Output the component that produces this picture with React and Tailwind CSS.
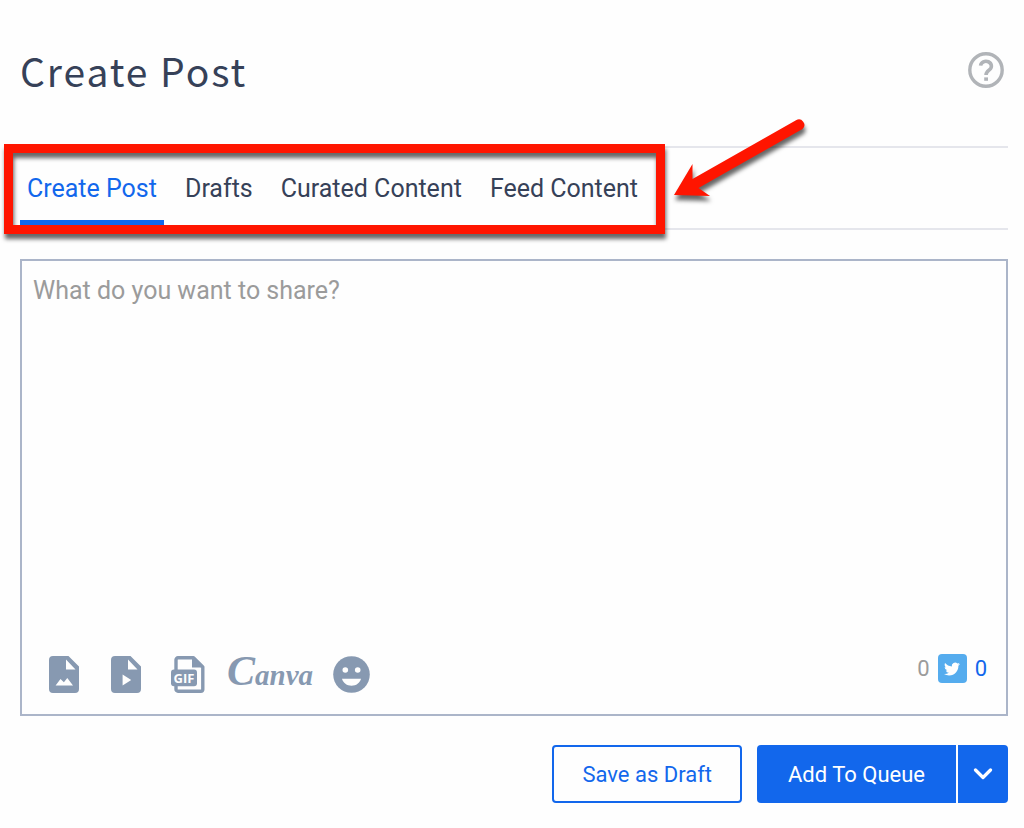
import React, { useState } from "react";

const tabs = ["Create Post", "Drafts", "Curated Content", "Feed Content"];

const HelpIcon = () => (
  <svg viewBox="0 0 36 36" className="size-9" fill="none" aria-hidden="true">
    <circle cx="18" cy="18" r="16.2" stroke="#b1b4b8" strokeWidth="3.4" />
    <path
      d="M12.6 13.6a5.4 4.8 0 1 1 9 4c-2.2 1.700-3.600 2.600-3.600 5.400"
      stroke="#b1b4b8"
      strokeWidth="3.6"
    />
    <rect x="16.2" y="25.4" width="3.8" height="3.4" fill="#b1b4b8" />
  </svg>
);

const ImageFileIcon = () => (
  <svg viewBox="0 0 30 37" className="h-[37px] w-[30px]" aria-hidden="true">
    <path
      fillRule="evenodd"
      fill="#8799b1"
      d="M4 0h15.5L30 10.5V33a4 4 0 0 1-4 4H4a4 4 0 0 1-4-4V4a4 4 0 0 1 4-4ZM17 3.600V13.400H26.500ZM6.600 29.400H24L18.300 22l-3.400 4.200-3.400-3.200Z"
    />
  </svg>
);

const VideoFileIcon = () => (
  <svg viewBox="0 0 30 37" className="h-[37px] w-[30px]" aria-hidden="true">
    <path
      fillRule="evenodd"
      fill="#8799b1"
      d="M4 0h15.5L30 10.5V33a4 4 0 0 1-4 4H4a4 4 0 0 1-4-4V4a4 4 0 0 1 4-4ZM17 3.600V13.400H26.500ZM11.600 18.600V29.400L20.200 24Z"
    />
  </svg>
);

const GifFileIcon = () => (
  <svg viewBox="0 0 34 37" className="h-[37px] w-[34px]" aria-hidden="true">
    <path
      fill="#fefefe"
      stroke="#8799b1"
      strokeWidth="3.4"
      strokeLinejoin="round"
      d="M7 1.800H22.500L31.800 11V33.200a2 2 0 0 1-2 2H7a2 2 0 0 1-2-2V3.800a2 2 0 0 1 2-2Z"
    />
    <path fill="#8799b1" d="M21 2v9.500H32L23 1.500Z" />
    <rect y="13.6" width="26" height="16.6" rx="3" fill="#8799b1" />
    <text
      x="13"
      y="26.6"
      textAnchor="middle"
      fill="#fefefe"
      className="font-['Open_Sans',sans-serif] text-[13px] font-bold"
    >
      GIF
    </text>
  </svg>
);

const SmileIcon = () => (
  <svg viewBox="0 0 37 37" className="size-[37px]" aria-hidden="true">
    <circle cx="18.5" cy="18.5" r="18.3" fill="#8799b1" />
    <circle cx="12.3" cy="14" r="2.8" fill="#fefefe" />
    <circle cx="24.7" cy="14" r="2.8" fill="#fefefe" />
    <path fill="#fefefe" d="M9 22.800H28C27 27 23 29.800 18.500 29.800S10 27 9 22.800Z" />
  </svg>
);

const TwitterIcon = () => (
  <svg viewBox="0 0 24 24" className="size-4" fill="#fefefe" aria-hidden="true">
    <path d="M23.950 4.570a10 10 0 0 1-2.820.770 4.960 4.960 0 0 0 2.160-2.720c-.950.550-2 .960-3.130 1.180a4.920 4.920 0 0 0-8.380 4.480C7.690 8.090 4.070 6.130 1.640 3.160a4.820 4.820 0 0 0-.670 2.480c0 1.710.870 3.210 2.190 4.100a4.900 4.900 0 0 1-2.230-.620v.060a4.920 4.920 0 0 0 3.950 4.830 5 5 0 0 1-2.210.080 4.940 4.940 0 0 0 4.600 3.420A9.870 9.870 0 0 1 0 19.540a14 14 0 0 0 7.550 2.210c9.050 0 14-7.500 14-13.980 0-.210 0-.420-.020-.630a9.940 9.940 0 0 0 2.420-2.570Z" />
  </svg>
);

const ChevronIcon = () => (
  <svg viewBox="0 0 20 12" className="h-3 w-5" fill="none" aria-hidden="true">
    <path
      d="M2.500 2 10 9.500 17.500 2"
      stroke="#fff"
      strokeWidth="3.2"
      strokeLinecap="round"
      strokeLinejoin="round"
    />
  </svg>
);

// red frame around the tabs, with the arrow that points at it
const Callout = () => (
  <div className="pointer-events-none absolute -top-1 -right-5 -bottom-1.5 -left-4 border-9 border-[#ff1500] drop-shadow-[1px_5px_2px_rgb(0_0_0/0.6)]">
    <svg
      viewBox="0 0 136 82"
      className="absolute -top-[34px] left-full ml-[18px] h-[82px] w-[136px]"
      fill="#ff1500"
      aria-hidden="true"
    >
      <path d="M0 76 18.500 45V60L122 1.200a5.500 5.500 0 0 1 6.500 8.800L24.500 69 36 77Z" />
    </svg>
  </div>
);

export default function App() {
  const [active, setActive] = useState("Create Post");

  return (
    <main className="min-h-screen bg-[#fefefe] pt-10 pr-4 pb-6 pl-5 font-[Roboto,sans-serif] text-[#364158]">
      <header className="mb-[46px] flex h-15 items-center justify-between pr-1">
        <h1 className="font-['Noto_Sans_CJK_SC',sans-serif] text-[39px] leading-none tracking-wider">
          Create Post
        </h1>
        <button type="button" aria-label="Help">
          <HelpIcon />
        </button>
      </header>

      <nav className="border-y-2 border-[#e5e6ec]">
        <div className="relative flex w-fit gap-3.5">
          {tabs.map((tab) => (
            <button
              key={tab}
              type="button"
              onClick={() => setActive(tab)}
              className={
                tab === active
                  ? "h-20 border-b-8 border-[#1267ec] px-[7px] pt-2.5 text-[25px] whitespace-nowrap text-[#1267ec]"
                  : "h-20 border-b-8 border-transparent px-[7px] pt-2.5 text-[25px] whitespace-nowrap"
              }
            >
              {tab}
            </button>
          ))}
          <Callout />
        </div>
      </nav>

      <section className="mt-[29px] flex flex-col border-2 border-[#abb5c9]">
        <textarea
          aria-label="Post text"
          placeholder="What do you want to share?"
          className="h-[391px] w-full resize-none px-[11px] py-3 text-[25px] leading-9 outline-none placeholder:text-[#9b9b9b]"
        />
        <div className="flex items-start justify-between pr-[19px] pb-[17px] pl-[27px]">
          <div className="flex h-[45px] items-center">
            <button type="button" aria-label="Add image" className="mr-8">
              <ImageFileIcon />
            </button>
            <button type="button" aria-label="Add video" className="mr-[30px]">
              <VideoFileIcon />
            </button>
            <button type="button" aria-label="Add GIF" className="mr-[22px]">
              <GifFileIcon />
            </button>
            <button
              type="button"
              className="mr-5 flex items-baseline pb-2 font-['Liberation_Serif',serif] text-[29px] leading-none font-bold text-[#8799b1] italic"
            >
              <span className="text-[42px]">C</span>anva
            </button>
            <button type="button" aria-label="Add emoji">
              <SmileIcon />
            </button>
          </div>
          <div className="flex items-center gap-2 text-[22px] text-[#9b9b9b]">
            <span>0</span>
            <span className="flex size-[29px] items-center justify-center rounded bg-[#55acee]">
              <TwitterIcon />
            </span>
            <span className="text-[#1267ec]">0</span>
          </div>
        </div>
      </section>

      <footer className="mt-[29px] flex justify-end gap-[15px] text-[22px]">
        <button
          type="button"
          className="h-[58px] rounded border-2 border-[#1267ec] px-7 text-[#1267ec]"
        >
          Save as Draft
        </button>
        <div className="flex gap-0.5">
          <button
            type="button"
            className="h-[58px] rounded-l bg-[#1267ec] px-[31px] text-white"
          >
            Add To Queue
          </button>
          <button
            type="button"
            aria-label="More options"
            className="flex h-[58px] w-[50px] items-center justify-center rounded-r bg-[#1267ec]"
          >
            <ChevronIcon />
          </button>
        </div>
      </footer>
    </main>
  );
}
